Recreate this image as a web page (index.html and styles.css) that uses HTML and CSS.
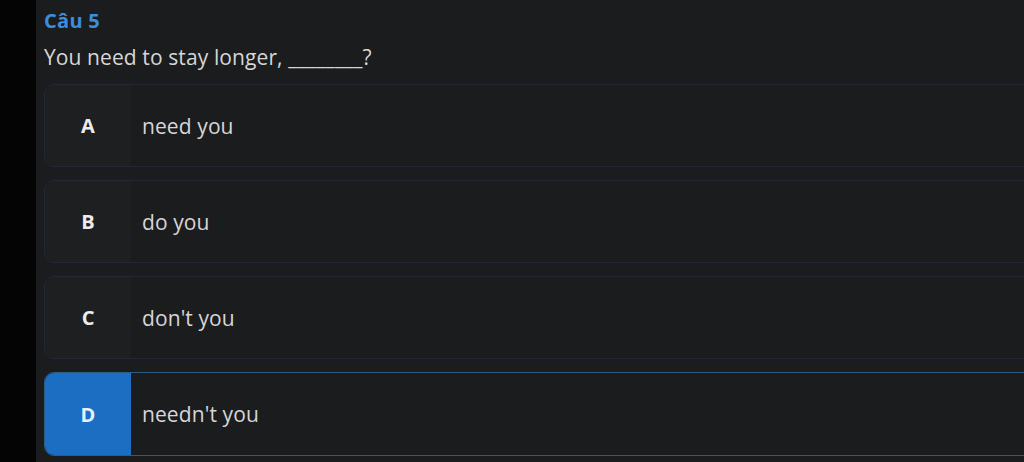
FILE: index.html
```html
<!DOCTYPE html>
<html lang="vi">
<head>
    <meta charset="UTF-8">
    <title>Câu 5</title>
    <link rel="stylesheet" href="styles.css">
</head>
<body>
    <div class="page">
        <div class="side"></div>
        <div class="quiz">
            <div class="title">Câu 5</div>
            <div class="question">You need to stay longer, ________?</div>
            <div class="options">
                <div class="option">
                    <div class="letter">A</div>
                    <div class="answer">need you</div>
                </div>
                <div class="option">
                    <div class="letter">B</div>
                    <div class="answer">do you</div>
                </div>
                <div class="option">
                    <div class="letter">C</div>
                    <div class="answer">don't you</div>
                </div>
                <div class="option selected">
                    <div class="letter">D</div>
                    <div class="answer">needn't you</div>
                </div>
            </div>
        </div>
    </div>
</body>
</html>
```

FILE: styles.css
```css
body {
    margin: 0;
    background-color: #1b1c1e;
    font-family: "Open Sans", "Noto Sans", sans-serif;
    color: #d6d6d6;
    overflow: hidden;
}
.page {
    display: flex;
    height: 462px;
}
.side {
    width: 36px;
    background-color: #040404;
    flex-shrink: 0;
}
.quiz {
    flex: 1;
    padding-left: 8px;
}
.title {
    color: #3b8ede;
    font-weight: bold;
    font-size: 20px;
    line-height: 24px;
    margin-top: 9px;
    letter-spacing: 0.3px;
}
.question {
    font-size: 21px;
    line-height: 26px;
    margin-top: 11px;
    letter-spacing: 0.1px;
}
.options {
    margin-top: 14px;
    display: flex;
    flex-direction: column;
    gap: 13px;
    margin-right: -12px;
}
.option {
    display: flex;
    height: 81px;
    border: 1px solid #232838;
    border-radius: 10px;
    overflow: hidden;
    background-color: #1b1c1e;
}
.letter {
    width: 86px;
    display: flex;
    align-items: center;
    justify-content: center;
    font-weight: bold;
    font-size: 20px;
    color: #ececec;
    background-color: #1e1f21;
}
.answer {
    display: flex;
    align-items: center;
    padding-left: 11px;
    font-size: 21px;
    letter-spacing: 0.1px;
}
.selected {
    height: 82px;
    border-color: #2c5c84;
}
.selected .letter {
    background-color: #1b6ec2;
    color: #e6f0fb;
}
```
